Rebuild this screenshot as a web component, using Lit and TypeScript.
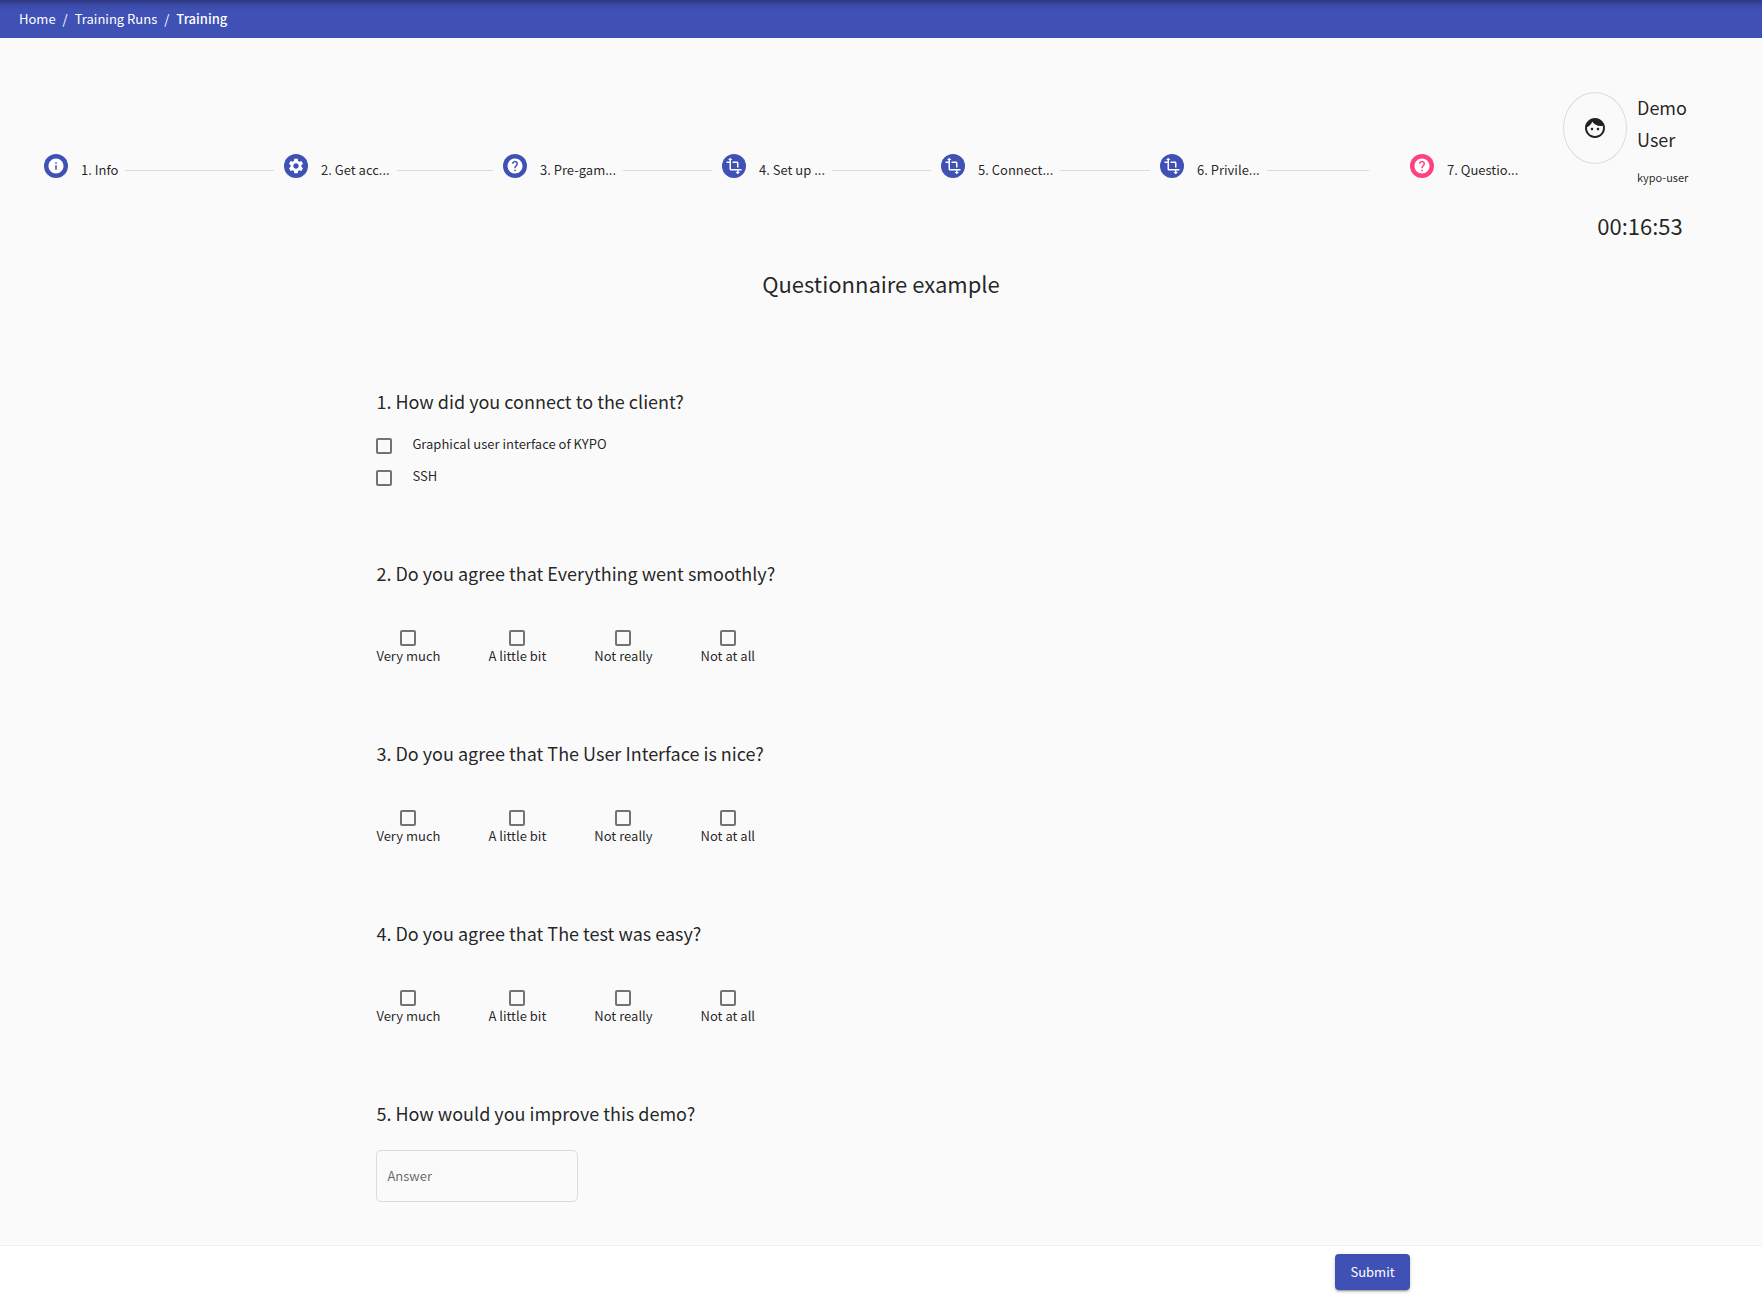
import { LitElement, html, css, svg } from "lit";
import { customElement, property, state } from "lit/decorators.js";

type IconName = "info" | "settings" | "help" | "transform" | "face";

const ICONS: Record<IconName, string> = {
  info: "M12 2C6.48 2 2 6.48 2 12s4.48 10 10 10 10-4.48 10-10S17.52 2 12 2zm1 15h-2v-6h2v6zm0-8h-2V7h2v2z",
  settings:
    "M19.14 12.94c.04-.3.06-.61.06-.94 0-.32-.02-.64-.07-.94l2.03-1.58c.18-.14.23-.41.12-.61l-1.92-3.32c-.12-.22-.37-.29-.59-.22l-2.39.96c-.5-.38-1.03-.7-1.62-.94l-.36-2.54c-.04-.24-.24-.41-.48-.41h-3.84c-.24 0-.43.17-.47.41l-.36 2.54c-.59.24-1.13.57-1.62.94l-2.39-.96c-.22-.08-.47 0-.59.22L2.74 8.87c-.12.21-.08.47.12.61l2.03 1.58c-.05.3-.09.63-.09.94s.02.64.07.94l-2.03 1.58c-.18.14-.23.41-.12.61l1.92 3.32c.12.22.37.29.59.22l2.39-.96c.5.38 1.03.7 1.62.94l.36 2.54c.05.24.24.41.48.41h3.84c.24 0 .44-.17.47-.41l.36-2.54c.59-.24 1.13-.56 1.62-.94l2.39.96c.22.08.47 0 .59-.22l1.92-3.32c.12-.22.07-.47-.12-.61l-2.01-1.58zM12 15.6c-1.98 0-3.6-1.62-3.6-3.6s1.62-3.6 3.6-3.6 3.6 1.62 3.6 3.6-1.62 3.6-3.6 3.6z",
  help: "M12 2C6.48 2 2 6.48 2 12s4.48 10 10 10 10-4.48 10-10S17.52 2 12 2zm1 17h-2v-2h2v2zm2.07-7.75l-.9.92C13.45 12.9 13 13.5 13 15h-2v-.5c0-1.1.45-2.1 1.17-2.83l1.24-1.26c.37-.36.59-.86.59-1.41 0-1.1-.9-2-2-2s-2 .9-2 2H8c0-2.21 1.79-4 4-4s4 1.79 4 4c0 .88-.36 1.68-.93 2.25z",
  transform:
    "M22 18v-2H8V4h2L7 1 4 4h2v2H2v2h4v8c0 1.1.9 2 2 2h8v2h-2l3 3 3-3h-2v-2h4zM10 8h6v6h2V8c0-1.1-.9-2-2-2h-6v2z",
  face: "M9 11.75c-.69 0-1.25.56-1.25 1.25s.56 1.25 1.25 1.25 1.25-.56 1.25-1.25-.56-1.25-1.25-1.25zm6 0c-.69 0-1.25.56-1.25 1.25s.56 1.25 1.25 1.25 1.25-.56 1.25-1.25-.56-1.25-1.25-1.25zM12 2C6.48 2 2 6.48 2 12s4.48 10 10 10 10-4.48 10-10S17.52 2 12 2zm0 18c-4.41 0-8-3.59-8-8 0-.29.02-.58.05-.86 2.36-1.05 4.23-2.98 5.21-5.37C11.07 8.33 14.05 10 17.42 10c.78 0 1.53-.09 2.25-.26.21.71.33 1.47.33 2.26 0 4.41-3.59 8-8 8z",
};

const icon = (name: IconName, size: number) => html`
  <svg width=${size} height=${size} viewBox="0 0 24 24" fill="currentColor" aria-hidden="true">
    ${svg`<path d=${ICONS[name]}></path>`}
  </svg>
`;

@customElement("training-stepper")
class TrainingStepper extends LitElement {
  @property({ type: Number }) active = 6;

  private steps: { icon: IconName; label: string }[] = [
    { icon: "info", label: "1. Info" },
    { icon: "settings", label: "2. Get acc..." },
    { icon: "help", label: "3. Pre-gam..." },
    { icon: "transform", label: "4. Set up ..." },
    { icon: "transform", label: "5. Connect..." },
    { icon: "transform", label: "6. Privile..." },
    { icon: "help", label: "7. Questio..." },
  ];

  static styles = css`
    :host {
      display: block;
    }
    .steps {
      display: grid;
      grid-template-columns: 240fr repeat(4, 219fr) 250fr 153px;
      margin: 0;
      padding: 0;
      list-style: none;
    }
    .step {
      display: flex;
      align-items: center;
      min-width: 0;
      white-space: nowrap;
    }
    .badge {
      flex: none;
      display: grid;
      place-items: center;
      width: 24px;
      height: 24px;
      margin: 0 13px 8px 0;
      border-radius: 50%;
      background: #3f51b5;
      color: #fff;
    }
    .active .badge {
      background: #ff4081;
    }
    .line {
      flex: 1;
      height: 1px;
      margin: 0 10px 0 7px;
      background: rgba(0, 0, 0, 0.12);
    }
    .step:nth-last-child(2) .line {
      margin-right: 41px;
    }
  `;

  render() {
    const last = this.steps.length - 1;
    return html`
      <ol class="steps">
        ${this.steps.map(
          (s, i) => html`
            <li class="step ${i === this.active ? "active" : ""}">
              <span class="badge">${icon(s.icon, 18)}</span>
              <span>${s.label}</span>
              ${i < last ? html`<span class="line"></span>` : ""}
            </li>
          `
        )}
      </ol>
    `;
  }
}

type Question =
  | { kind: "multi"; title: string; options: string[] }
  | { kind: "rating"; title: string; options: string[] }
  | { kind: "text"; title: string };

const SCALE = ["Very much", "A little bit", "Not really", "Not at all"];

const QUESTIONS: Question[] = [
  {
    kind: "multi",
    title: "1. How did you connect to the client?",
    options: ["Graphical user interface of KYPO", "SSH"],
  },
  { kind: "rating", title: "2. Do you agree that Everything went smoothly?", options: SCALE },
  { kind: "rating", title: "3. Do you agree that The User Interface is nice?", options: SCALE },
  { kind: "rating", title: "4. Do you agree that The test was easy?", options: SCALE },
  { kind: "text", title: "5. How would you improve this demo?" },
];

@customElement("app-root")
class AppRoot extends LitElement {
  /** Chosen option of each rating question, by question index. */
  @state() private ratings: Record<number, number> = {};

  static styles = css`
    :host {
      display: flex;
      flex-direction: column;
      min-height: 100vh;
      background: #fafafa;
      color: rgba(0, 0, 0, 0.87);
      font: 400 13px/20px "Noto Sans CJK SC", "Noto Sans", sans-serif;
    }
    .topbar {
      display: flex;
      align-items: center;
      gap: 7px;
      height: 38px;
      padding: 0 19px;
      background: linear-gradient(rgba(0, 0, 0, 0.3), rgba(0, 0, 0, 0.08) 5px, transparent 11px) #3f51b5;
      color: #fff;
    }
    .topbar a {
      color: inherit;
      text-decoration: none;
    }
    .topbar .current {
      font-weight: 500;
    }
    .head {
      display: grid;
      grid-template-columns: 1fr 154px;
      padding: 53px 45px 0 44px;
    }
    .stepper {
      margin-top: 63px;
    }
    .user {
      display: flex;
      gap: 10px;
    }
    .avatar {
      display: grid;
      place-items: center;
      box-sizing: border-box;
      width: 64px;
      height: 72px;
      margin-top: 1px;
      border: 1px solid rgba(0, 0, 0, 0.12);
      border-radius: 50%;
    }
    .name {
      font-size: 18px;
      line-height: 32px;
    }
    .login {
      margin-top: 12px;
      font-size: 11px;
    }
    .timer {
      margin-top: 22px;
      font-size: 22px;
      line-height: 32px;
      text-align: center;
    }
    .title {
      margin: 26px 0 86px;
      font-size: 22px;
      font-weight: 400;
      line-height: 32px;
      text-align: center;
    }
    .form {
      flex: 1;
      margin: 0 20%;
      padding: 0 24px 43px;
    }
    .question {
      margin: 0 0 65px;
      padding: 0;
      border: 0;
      min-width: 0;
    }
    .question:last-child {
      margin-bottom: 0;
    }
    .prompt {
      display: block;
      margin: 0;
      padding: 0 0 11px;
      font-size: 18px;
      font-weight: 400;
      line-height: 32px;
    }
    .check {
      appearance: none;
      flex: none;
      box-sizing: border-box;
      width: 16px;
      height: 16px;
      margin: 0;
      border: 2px solid rgba(0, 0, 0, 0.54);
      border-radius: 2px;
      cursor: pointer;
    }
    .check:checked {
      border-color: #ff4081;
      background: #ff4081;
    }
    .option {
      display: flex;
      align-items: center;
      gap: 20px;
      height: 32px;
    }
    .option .check {
      margin-top: 4px;
    }
    .scale {
      display: flex;
      gap: 48px;
      padding: 30px 0 6px;
    }
    .grade {
      display: flex;
      flex-direction: column;
      align-items: center;
    }
    .answer {
      display: block;
      box-sizing: border-box;
      width: 202px;
      height: 52px;
      margin-top: 10px;
      padding: 0 10px 2px;
      border: 1px solid rgba(0, 0, 0, 0.12);
      border-radius: 5px;
      background: none;
      color: inherit;
      font: inherit;
    }
    .answer::placeholder {
      color: rgba(0, 0, 0, 0.6);
      opacity: 1;
    }
    .footer {
      padding: 8px 20% 4px 0;
      border-top: 1px solid #f0f0f0;
      background: #fff;
      text-align: right;
    }
    .submit {
      height: 36px;
      padding: 0 15px;
      border: 0;
      border-radius: 4px;
      background: #3f51b5;
      color: #fff;
      font: inherit;
      vertical-align: top;
      cursor: pointer;
      box-shadow: 0 3px 1px -2px rgba(0, 0, 0, 0.2), 0 2px 2px 0 rgba(0, 0, 0, 0.14),
        0 1px 5px 0 rgba(0, 0, 0, 0.12);
    }
  `;

  private rate(question: number, option: number, event: Event) {
    const next = { ...this.ratings };
    if ((event.target as HTMLInputElement).checked) next[question] = option;
    else delete next[question];
    this.ratings = next;
  }

  private renderQuestion(q: Question, i: number) {
    if (q.kind === "text") {
      return html`
        <div class="question">
          <label class="prompt" for="answer-${i}">${q.title}</label>
          <input class="answer" id="answer-${i}" type="text" placeholder="Answer" />
        </div>
      `;
    }
    if (q.kind === "multi") {
      return html`
        <fieldset class="question">
          <legend class="prompt">${q.title}</legend>
          ${q.options.map(
            (o) => html`<label class="option"><input class="check" type="checkbox" /><span>${o}</span></label>`
          )}
        </fieldset>
      `;
    }
    return html`
      <fieldset class="question">
        <legend class="prompt">${q.title}</legend>
        <div class="scale">
          ${q.options.map(
            (o, n) => html`
              <label class="grade">
                <input
                  class="check"
                  type="checkbox"
                  .checked=${this.ratings[i] === n}
                  @change=${(e: Event) => this.rate(i, n, e)}
                />
                <span>${o}</span>
              </label>
            `
          )}
        </div>
      </fieldset>
    `;
  }

  render() {
    return html`
      <nav class="topbar" aria-label="Breadcrumb">
        <a href="#home">Home</a><span>/</span><a href="#runs">Training Runs</a><span>/</span
        ><a class="current" href="#training">Training</a>
      </nav>
      <header class="head">
        <training-stepper class="stepper"></training-stepper>
        <div>
          <div class="user">
            <span class="avatar">${icon("face", 24)}</span>
            <div>
              <div class="name">Demo<br />User</div>
              <div class="login">kypo-user</div>
            </div>
          </div>
          <div class="timer">00:16:53</div>
        </div>
      </header>
      <h1 class="title">Questionnaire example</h1>
      <form class="form" id="questionnaire" @submit=${(e: Event) => e.preventDefault()}>
        ${QUESTIONS.map((q, i) => this.renderQuestion(q, i))}
      </form>
      <footer class="footer">
        <button class="submit" type="submit" form="questionnaire">Submit</button>
      </footer>
    `;
  }
}
